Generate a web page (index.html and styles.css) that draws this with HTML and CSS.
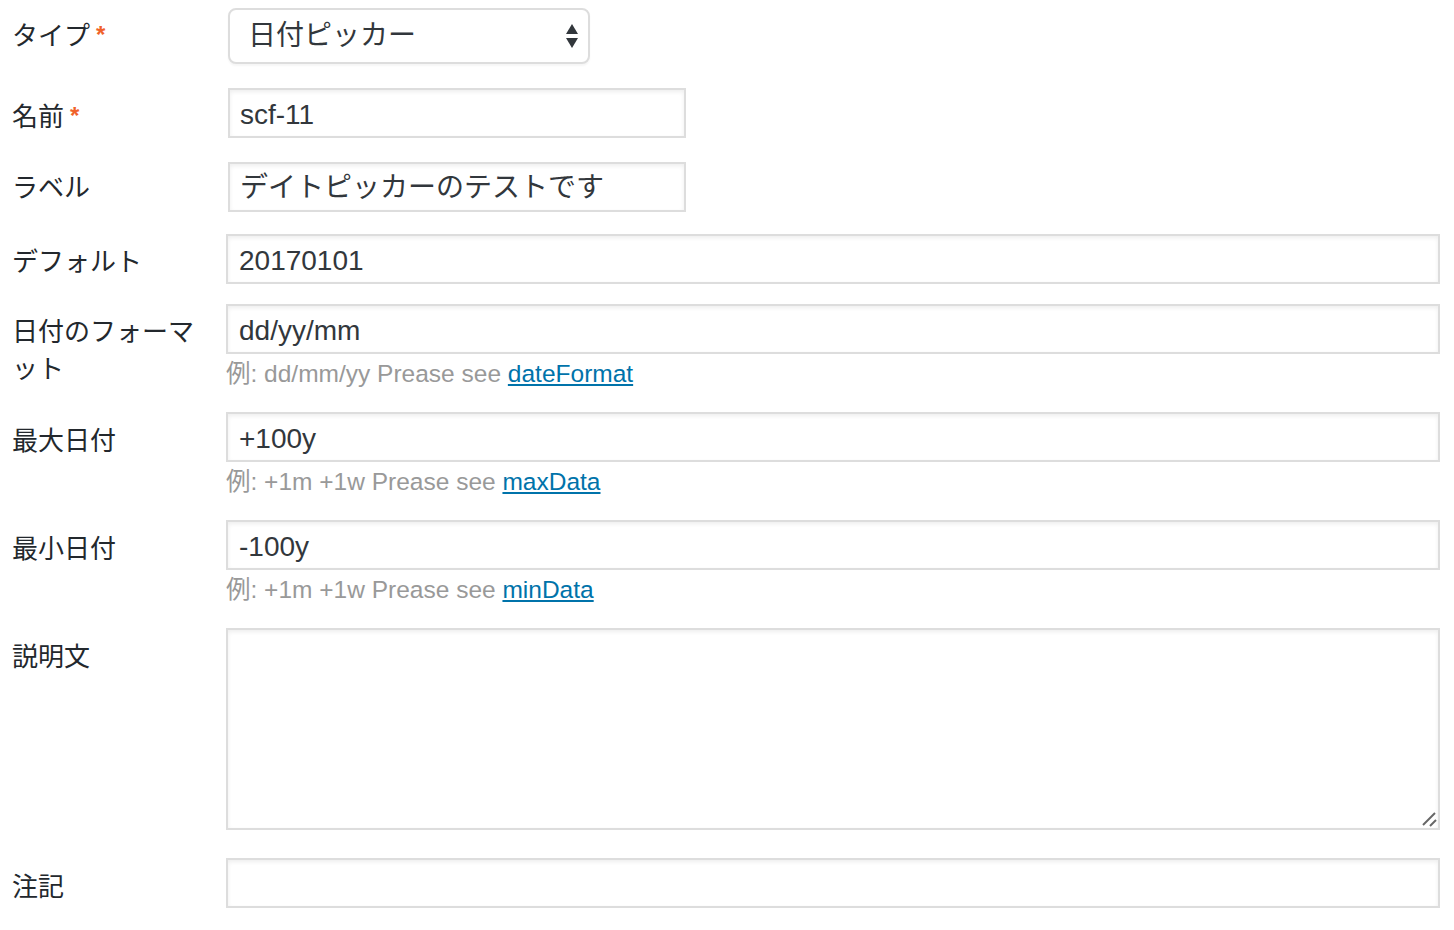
FILE: index.html
```html
<!DOCTYPE html>
<html lang="ja">
<head>
<meta charset="utf-8">
<title>日付ピッカー</title>
<link rel="stylesheet" href="styles.css">
</head>
<body>
<form class="form">
  <div class="row row-type">
    <div class="label lbl-top">タイプ<span class="req">*</span></div>
    <div class="field">
      <div class="select">
        <span class="select-text">日付ピッカー</span>
        <svg class="arrows" width="14" height="26" viewBox="0 0 14 26"><polygon points="1,10 7,0 13,10" fill="#32373c"/><polygon points="1,14 13,14 7,24" fill="#32373c"/></svg>
      </div>
    </div>
  </div>
  <div class="row gap24">
    <div class="label lbl-mid">名前<span class="req">*</span></div>
    <div class="field"><input class="input short" type="text" value="scf-11"></div>
  </div>
  <div class="row gap24">
    <div class="label lbl-top">ラベル</div>
    <div class="field"><input class="input short cjk" type="text" value="デイトピッカーのテストです"></div>
  </div>
  <div class="row gap22">
    <div class="label">デフォルト</div>
    <div class="field"><input class="input" type="text" value="20170101"></div>
  </div>
  <div class="row gap20">
    <div class="label">日付のフォーマット</div>
    <div class="field">
      <input class="input" type="text" value="dd/yy/mm">
      <p class="desc">例: dd/mm/yy Prease see <a href="#">dateFormat</a></p>
    </div>
  </div>
  <div class="row gap23">
    <div class="label lbl-low">最大日付</div>
    <div class="field">
      <input class="input" type="text" value="+100y">
      <p class="desc">例: +1m +1w Prease see <a href="#">maxData</a></p>
    </div>
  </div>
  <div class="row gap23">
    <div class="label lbl-low">最小日付</div>
    <div class="field">
      <input class="input" type="text" value="-100y">
      <p class="desc">例: +1m +1w Prease see <a href="#">minData</a></p>
    </div>
  </div>
  <div class="row gap23">
    <div class="label lbl-low">説明文</div>
    <div class="field">
      <div class="ta-wrap">
        <textarea class="textarea"></textarea>
        <svg class="grip" width="16" height="16" viewBox="0 0 16 16"><line x1="2" y1="14" x2="14" y2="2" stroke="#666" stroke-width="2"/><line x1="9" y1="15" x2="15" y2="9" stroke="#666" stroke-width="2"/></svg>
      </div>
    </div>
  </div>
  <div class="row gap28">
    <div class="label lbl-low">注記</div>
    <div class="field"><input class="input" type="text" value=""></div>
  </div>
</form>
</body>
</html>
```
FILE: styles.css
```css
html, body {
  margin: 0;
  padding: 0;
  background: #fff;
}
body {
  font-family: "Liberation Sans", "Noto Sans CJK JP", sans-serif;
  color: #23282d;
}
.form {
  padding: 8px 14px 0 12px;
}
.row {
  display: grid;
  grid-template-columns: 214px 1fr;
  align-items: start;
}
.gap20 { margin-top: 20px; }
.gap22 { margin-top: 22px; }
.gap23 { margin-top: 23px; }
.gap24 { margin-top: 24px; }
.gap28 { margin-top: 28px; }

.label {
  font-size: 26px;
  line-height: 37px;
  padding-top: 10px;
  padding-right: 20px;
  color: #23282d;
}
.lbl-top { padding-top: 8px; }
.lbl-mid { padding-top: 9px; }
.lbl-low { padding-top: 11px; }
.req {
  color: #f0622a;
  font-size: 24px;
  font-weight: bold;
  margin-left: 6px;
  vertical-align: 2px;
}
.field {
  min-width: 0;
}
.select {
  position: relative;
  box-sizing: border-box;
  width: 362px;
  height: 56px;
  margin-left: 2px;
  border: 2px solid #ddd;
  border-radius: 8px;
  background: #fff;
  box-shadow: 0 2px 2px rgba(0, 0, 0, 0.04);
  padding-left: 18px;
  display: flex;
  align-items: center;
}
.select-text {
  font-size: 28px;
  color: #32373c;
  line-height: 1;
  margin-top: -1px;
}
.arrows {
  position: absolute;
  right: 9px;
  top: 14px;
}
.input {
  display: block;
  box-sizing: border-box;
  width: 100%;
  height: 50px;
  margin: 0;
  border: 2px solid #ddd;
  border-radius: 0;
  background: #fff;
  box-shadow: inset 0 2px 4px rgba(0, 0, 0, 0.07);
  padding: 3px 11px 0;
  font-family: "Liberation Sans", "Noto Sans CJK JP", sans-serif;
  font-size: 28px;
  color: #32373c;
  outline: none;
}
.input.short {
  width: 458px;
  margin-left: 2px;
  padding-left: 10px;
}
.input.cjk {
  padding-top: 0;
  padding-bottom: 4px;
}
.desc {
  margin: 5px 0 0;
  font-size: 24.5px;
  line-height: 30px;
  color: #999;
}
.desc a {
  color: #0073aa;
  text-decoration: underline;
}
.ta-wrap {
  position: relative;
}
.textarea {
  display: block;
  box-sizing: border-box;
  width: 100%;
  height: 202px;
  margin: 0;
  border: 2px solid #ddd;
  background: #fff;
  box-shadow: inset 0 2px 4px rgba(0, 0, 0, 0.07);
  resize: none;
  outline: none;
  font-family: "Liberation Sans", "Noto Sans CJK JP", sans-serif;
  font-size: 28px;
}
.grip {
  position: absolute;
  right: 3px;
  bottom: 3px;
}
```
